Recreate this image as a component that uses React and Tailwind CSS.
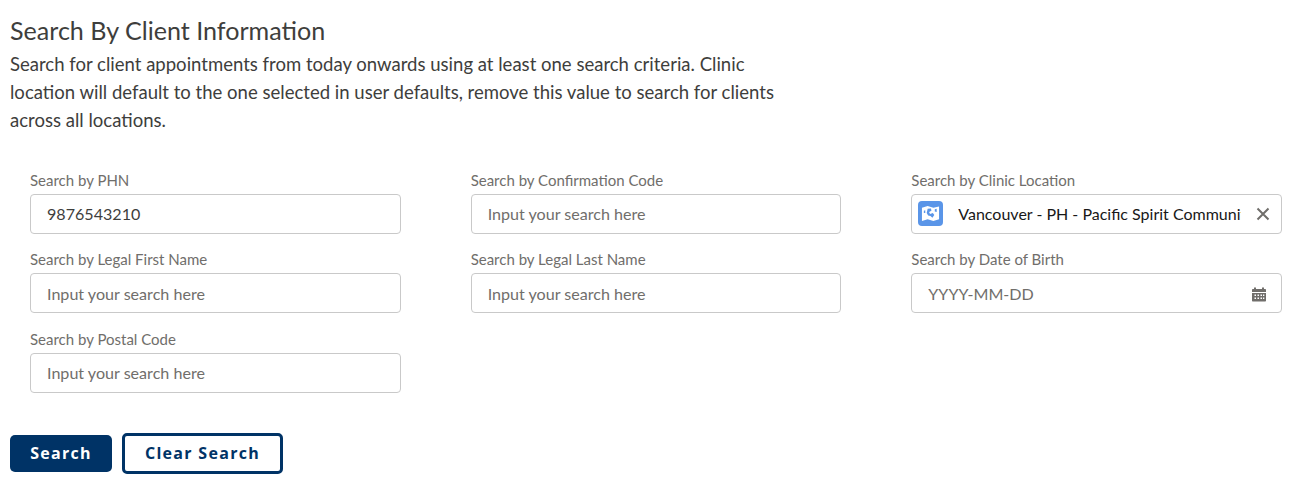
import React from "react";

const lato = "font-['Lato',sans-serif]";

function Field({ label, placeholder, value, right }) {
  return (
    <div className="flex flex-col h-[79.5px]">
      <label className="text-[15px] leading-[19.5px] h-[23px] text-[#706e6b]">{label}</label>
      <div className="flex items-center h-[40px] rounded-[4px] border border-[#c9c9c9] bg-white pt-[1px] pl-[16px] pr-[12px]">
        <input
          readOnly
          value={value || ""}
          placeholder={placeholder}
          className="flex-1 min-w-0 outline-none bg-transparent text-[16.1px] text-[#3e3e3c] placeholder:text-[#706e6b] font-['Lato',sans-serif]"
        />
        {right}
      </div>
    </div>
  );
}

function LocationIcon() {
  return (
    <span className="flex items-center justify-center w-[25px] h-[25px] rounded-[4px] bg-[#5a95e8] shrink-0">
      <svg width="19" height="19" viewBox="0 0 20 20">
        <path fill="#fff" d="M1 4 L7 2 L13 4 L19 2.500 V16 L13 18 L7 16 L1 18 Z" />
        <path fill="#5a95e8" d="M7 5 L10.500 4.800 L11 7 L8.500 8.500 L9.500 10.500 L12.500 9.500 L14 11.500 L12 14.500 L10 12.500 L7.500 12 L6 9.500 Z" />
        <path fill="#5a95e8" d="M14.500 5.500 L16.500 5 L16.500 8.500 L14.500 8 Z" />
        <path fill="#5a95e8" d="M3 7 L4.500 6.500 L4.500 9.500 L3 9.500 Z" />
      </svg>
    </span>
  );
}

function LocationField() {
  return (
    <div className="flex flex-col h-[79.5px]">
      <label className="text-[15px] leading-[19.5px] h-[23px] text-[#706e6b]">Search by Clinic Location</label>
      <div className="flex items-center h-[40px] rounded-[4px] border border-[#c9c9c9] bg-white pl-[6px] pr-[11px]">
        <LocationIcon />
        <span className="ml-[15px] mt-[1px] w-[283px] overflow-hidden whitespace-nowrap text-[16px] text-[#181818]">
          Vancouver - PH - Pacific Spirit Community Health Centre
        </span>
        <svg className="ml-auto" width="14" height="14" viewBox="0 0 14 14" stroke="#706e6b" strokeWidth="2" fill="none">
          <path d="M1.500 1.500 L12.500 12.500 M12.500 1.500 L1.500 12.500" />
        </svg>
      </div>
    </div>
  );
}

function CalendarIcon() {
  return (
    <svg className="mr-[2px] mt-[1px] shrink-0" width="16" height="17" viewBox="0 0 16 16" fill="#706e6b">
      <path fillRule="evenodd" d="M3 1h2v1.500h6V1h2v1.500h1c.6 0 1 .4 1 1V5.500H1V3.500c0-.6.4-1 1-1h1Z" />
      <path fillRule="evenodd" d="M1 6.500h14V14c0 .6-.4 1-1 1H2c-.6 0-1-.4-1-1Z M3.500 8v1.500H5V8Z M6.500 8v1.500H8V8Z M9.500 8v1.500H11V8Z M12 8v1.500h1.300V8Z M3.500 11v1.500H5V11Z M6.500 11v1.500H8V11Z M9.500 11v1.500H11V11Z M12 11v1.500h1.300V11Z" />
    </svg>
  );
}

export default function App() {
  return (
    <div className={`${lato} w-[1300px] h-[485px] bg-white overflow-hidden pl-[10px] pr-[18px] pt-[15px]`}>
      <h1 className="text-[25.1px] leading-[30px] text-[#3e3e3c]">Search By Client Information</h1>
      <p className="mt-[5px] w-[780px] text-[18.55px] leading-[28px] text-[#3e3e3c]">
        Search for client appointments from today onwards using at least one search criteria. Clinic location will default to the one selected in user defaults, remove this value to search for clients across all locations.
      </p>
      <div className="mt-[36.6px] ml-[20px] grid grid-cols-3 gap-x-[70px]">
        <Field label="Search by PHN" value="9876543210" />
        <Field label="Search by Confirmation Code" placeholder="Input your search here" />
        <LocationField />
        <Field label="Search by Legal First Name" placeholder="Input your search here" />
        <Field label="Search by Legal Last Name" placeholder="Input your search here" />
        <Field label="Search by Date of Birth" placeholder="YYYY-MM-DD" right={<CalendarIcon />} />
        <Field label="Search by Postal Code" placeholder="Input your search here" />
      </div>
      <div className="mt-[23.5px] flex items-center gap-[10px] font-['Open_Sans',sans-serif] font-bold text-[16px] tracking-[1.3px]">
        <button className="w-[102px] h-[37px] rounded-[5px] bg-[#003366] text-white">Search</button>
        <button className="w-[161px] h-[41px] rounded-[5px] border-[3px] border-[#003366] bg-white text-[#003366]">Clear Search</button>
      </div>
    </div>
  );
}
